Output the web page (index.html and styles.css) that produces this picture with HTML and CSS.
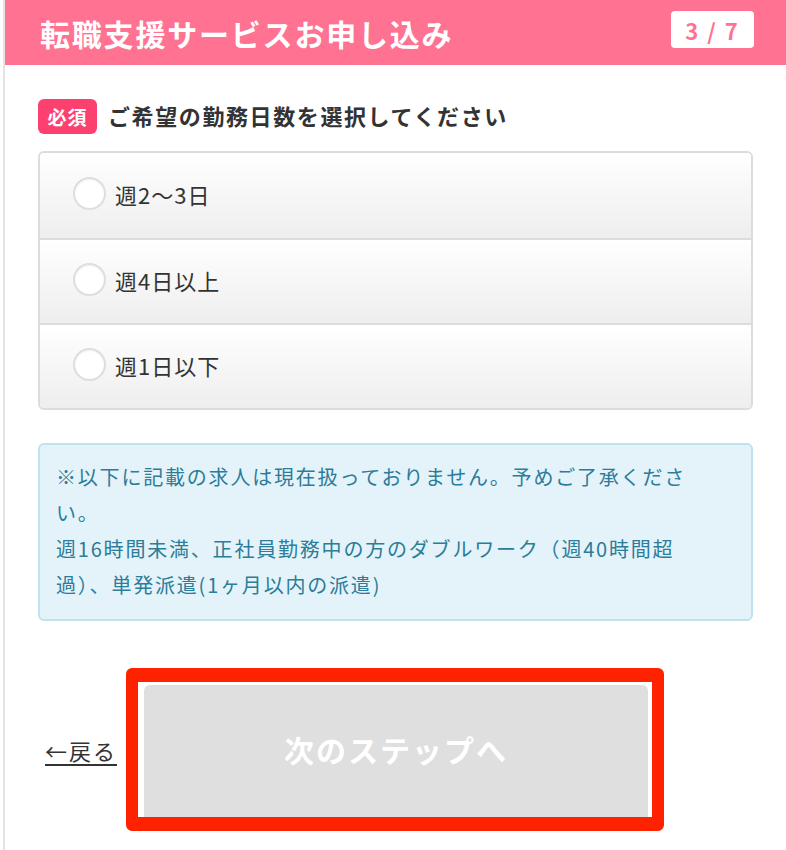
FILE: index.html
```html
<!DOCTYPE html>
<html lang="ja">
<head>
    <meta charset="UTF-8">
    <meta name="viewport" content="width=device-width, initial-scale=1.0">
    <title>転職支援サービスお申し込み</title>
    <link rel="stylesheet" href="styles.css">
</head>
<body>
    <div class="page">
        <header class="form-header">
            <h1>転職支援サービスお申し込み</h1>
            <span class="step-count">3 / 7</span>
        </header>

        <main class="form-body">
            <div class="question">
                <span class="required">必須</span>
                <span class="question-text">ご希望の勤務日数を選択してください</span>
            </div>

            <div class="options">
                <label class="option">
                    <input type="radio" name="days" value="2-3">
                    <span class="radio"></span>
                    <span class="option-text">週2〜3日</span>
                </label>
                <label class="option">
                    <input type="radio" name="days" value="4+">
                    <span class="radio"></span>
                    <span class="option-text">週4日以上</span>
                </label>
                <label class="option">
                    <input type="radio" name="days" value="1-">
                    <span class="radio"></span>
                    <span class="option-text">週1日以下</span>
                </label>
            </div>

            <div class="notice">
                ※以下に記載の求人は現在扱っておりません。予めご了承ください。<br>
                週16時間未満、正社員勤務中の方のダブルワーク（週40時間超過）、単発派遣(1ヶ月以内の派遣)
            </div>

            <div class="actions">
                <a href="#" class="back-link">←戻る</a>
                <div class="next-frame">
                    <button class="next-btn" disabled>次のステップへ</button>
                </div>
            </div>
        </main>
    </div>
</body>
</html>
```

FILE: styles.css
```css
:root {
    --header-pink: #ff7292;
    --badge-pink: #fc4170;
    --text-dark: #333;
    --border-gray: #dcdcdc;
    --info-bg: #e3f3f9;
    --info-border: #bfe3ee;
    --info-text: #2c7c9a;
}

* {
    margin: 0;
    padding: 0;
    box-sizing: border-box;
    font-family: 'Noto Sans CJK JP', 'Noto Sans', sans-serif;
}

body {
    background-color: #fff;
    color: var(--text-dark);
    width: 786px;
    height: 850px;
    overflow: hidden;
}

.page {
    margin-left: 3px;
    border-left: 2px solid #e4e4e4;
    min-height: 850px;
}

.form-header {
    height: 65px;
    background-color: var(--header-pink);
    display: flex;
    align-items: center;
    justify-content: space-between;
    padding: 0 32px 0 35px;
}

.form-header h1 {
    color: #fff;
    font-size: 30px;
    font-weight: 700;
    letter-spacing: 1.8px;
    line-height: 1;
}

.step-count {
    display: flex;
    align-items: center;
    justify-content: center;
    width: 83px;
    height: 37px;
    margin-top: -6px;
    background-color: #fff;
    border-radius: 4px;
    color: var(--header-pink);
    font-size: 22px;
    font-weight: 700;
    letter-spacing: 2px;
}

.form-body {
    padding: 34px 33px 0 33px;
}

.question {
    display: flex;
    align-items: center;
    gap: 11px;
    margin-bottom: 17px;
}

.required {
    display: flex;
    align-items: center;
    justify-content: center;
    width: 59px;
    height: 35px;
    background-color: var(--badge-pink);
    border-radius: 6px;
    color: #fff;
    font-size: 19px;
    font-weight: 700;
    letter-spacing: 1px;
}

.question-text {
    font-size: 22px;
    font-weight: 700;
    letter-spacing: 1.6px;
    color: var(--text-dark);
    margin-top: -3px;
}

.options {
    border: 2px solid var(--border-gray);
    border-radius: 6px;
    overflow: hidden;
}

.option {
    display: flex;
    align-items: center;
    height: 85px;
    padding-left: 33px;
    padding-bottom: 4px;
    background: linear-gradient(#fff, #eeeeee);
    cursor: pointer;
}

.option + .option {
    border-top: 2px solid var(--border-gray);
}

.option input {
    display: none;
}

.radio {
    width: 33px;
    height: 33px;
    border: 2px solid #dedede;
    border-radius: 50%;
    background-color: #fff;
    box-shadow: inset 0 1px 2px rgba(0, 0, 0, 0.06);
    margin-right: 9px;
}

.option-text {
    font-size: 22px;
    letter-spacing: 1px;
    color: var(--text-dark);
}

.notice {
    margin-top: 33px;
    padding: 14px 46px 16px 16px;
    background-color: var(--info-bg);
    border: 2px solid var(--info-border);
    border-radius: 6px;
    color: var(--info-text);
    font-size: 20px;
    line-height: 36px;
    letter-spacing: 1.8px;
}

.actions {
    display: flex;
    align-items: center;
    margin-top: 47px;
}

.back-link {
    margin-left: 7px;
    margin-right: 9px;
    color: var(--text-dark);
    font-size: 22px;
    letter-spacing: 2px;
    text-decoration: underline;
    text-decoration-thickness: 2px;
    text-underline-offset: 4px;
}

.next-frame {
    width: 538px;
    height: 163px;
    border: solid #ff2200;
    border-width: 14px 12px 14px 12px;
    border-radius: 6px;
    padding: 3px 4px 0 6px;
    background-color: #fff;
}

.next-btn {
    display: flex;
    align-items: center;
    justify-content: center;
    width: 100%;
    height: 100%;
    border: none;
    border-radius: 6px 6px 0 0;
    background-color: #dfdfdf;
    color: #fff;
    font-size: 30px;
    font-weight: 700;
    letter-spacing: 2px;
    padding-bottom: 4px;
}
```
